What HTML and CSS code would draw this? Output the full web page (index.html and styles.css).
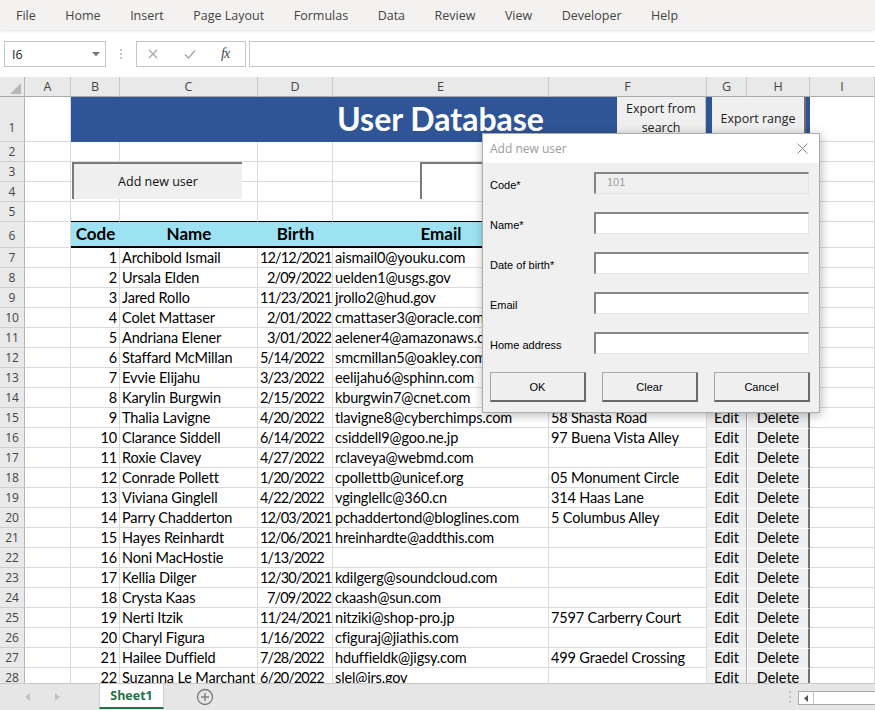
FILE: index.html
```html
<!DOCTYPE html>
<html>
<head>
<meta charset="utf-8">
<title>User Database</title>
<link rel="stylesheet" href="styles.css">
</head>
<body>
<div class="menubar">
  <span>File</span><span>Home</span><span>Insert</span><span>Page Layout</span><span>Formulas</span><span>Data</span><span>Review</span><span>View</span><span>Developer</span><span>Help</span>
</div>
<div class="fbar">
  <div class="namebox"><span>I6</span><svg class="caret" width="8" height="5" viewBox="0 0 8 5"><polygon points="0,0 8,0 4,4.5" fill="#7a7a7a"/></svg></div>
  <div class="grip"><i></i><i></i><i></i></div>
  <div class="fxbox">
    <svg class="ic-x" width="10" height="10" viewBox="0 0 10 10"><path d="M1 1L9 9M9 1L1 9" stroke="#a6a6a6" stroke-width="1.3" fill="none"/></svg>
    <svg class="ic-ok" width="12" height="10" viewBox="0 0 12 10"><path d="M1 5.5L4.5 9L11 1.5" stroke="#a6a6a6" stroke-width="1.4" fill="none"/></svg>
    <span class="fx">fx</span>
  </div>
  <div class="finput"></div>
</div>

<div class="sheet">
  <div class="row colhdr">
    <div class="corner"><svg width="24" height="19" viewBox="0 0 24 19"><polygon points="10,17 21,17 21,6" fill="#b8b8b8"/></svg></div>
    <div>A</div><div>B</div><div>C</div><div>D</div><div>E</div><div>F</div><div>G</div><div>H</div><div>I</div>
  </div>

  <div class="row r1">
    <div class="rh">1</div><div class="c"></div>
    <div class="title">User Database
      <div class="xbtn xsearch">Export from<br>search</div>
      <div class="xbtn xrange">Export range</div>
    </div>
    <div class="c"></div>
  </div>

  <div class="row"><div class="rh">2</div><div class="c"></div><div class="c"></div><div class="c"></div><div class="c"></div><div class="c"></div><div class="c"></div><div class="c"></div><div class="c"></div><div class="c"></div></div>

  <div class="pair">
    <div class="row"><div class="rh">3</div><div class="c"></div><div class="c"></div><div class="c"></div><div class="c"></div><div class="c"></div><div class="c"></div><div class="c"></div><div class="c"></div><div class="c"></div></div>
    <div class="row"><div class="rh">4</div><div class="c"></div><div class="c"></div><div class="c"></div><div class="c"></div><div class="c"></div><div class="c"></div><div class="c"></div><div class="c"></div><div class="c"></div></div>
    <div class="addbtn">Add new user</div>
    <div class="searchbox"></div>
  </div>

  <div class="row"><div class="rh">5</div><div class="c"></div><div class="c bb"></div><div class="c bb"></div><div class="c bb"></div><div class="c bb"></div><div class="c bb"></div><div class="c bb"></div><div class="c bb"></div><div class="c"></div></div>

  <div class="row r6"><div class="rh">6</div><div class="c"></div><div class="hd">Code</div><div class="hd">Name</div><div class="hd">Birth</div><div class="hd">Email</div><div class="hd">Address</div><div class="hd"></div><div class="hd"></div><div class="c"></div></div>

  <div class="row"><div class="rh">7</div><div class="c"></div><div class="c n">1</div><div class="c">Archibold Ismail</div><div class="c n">12/12/2021</div><div class="c">aismail0@youku.com</div><div class="c"></div><div class="eb">Edit</div><div class="db">Delete</div><div class="c"></div></div>
  <div class="row"><div class="rh">8</div><div class="c"></div><div class="c n">2</div><div class="c">Ursala Elden</div><div class="c n">2/09/2022</div><div class="c">uelden1@usgs.gov</div><div class="c"></div><div class="eb">Edit</div><div class="db">Delete</div><div class="c"></div></div>
  <div class="row"><div class="rh">9</div><div class="c"></div><div class="c n">3</div><div class="c">Jared Rollo</div><div class="c">11/23/2021</div><div class="c">jrollo2@hud.gov</div><div class="c"></div><div class="eb">Edit</div><div class="db">Delete</div><div class="c"></div></div>
  <div class="row"><div class="rh">10</div><div class="c"></div><div class="c n">4</div><div class="c">Colet Mattaser</div><div class="c n">2/01/2022</div><div class="c">cmattaser3@oracle.com</div><div class="c"></div><div class="eb">Edit</div><div class="db">Delete</div><div class="c"></div></div>
  <div class="row"><div class="rh">11</div><div class="c"></div><div class="c n">5</div><div class="c">Andriana Elener</div><div class="c n">3/01/2022</div><div class="c">aelener4@amazonaws.com</div><div class="c"></div><div class="eb">Edit</div><div class="db">Delete</div><div class="c"></div></div>
  <div class="row"><div class="rh">12</div><div class="c"></div><div class="c n">6</div><div class="c">Staffard McMillan</div><div class="c">5/14/2022</div><div class="c">smcmillan5@oakley.com</div><div class="c"></div><div class="eb">Edit</div><div class="db">Delete</div><div class="c"></div></div>
  <div class="row"><div class="rh">13</div><div class="c"></div><div class="c n">7</div><div class="c">Evvie Elijahu</div><div class="c">3/23/2022</div><div class="c">eelijahu6@sphinn.com</div><div class="c"></div><div class="eb">Edit</div><div class="db">Delete</div><div class="c"></div></div>
  <div class="row"><div class="rh">14</div><div class="c"></div><div class="c n">8</div><div class="c">Karylin Burgwin</div><div class="c">2/15/2022</div><div class="c">kburgwin7@cnet.com</div><div class="c"></div><div class="eb">Edit</div><div class="db">Delete</div><div class="c"></div></div>
  <div class="row"><div class="rh">15</div><div class="c"></div><div class="c n">9</div><div class="c">Thalia Lavigne</div><div class="c">4/20/2022</div><div class="c">tlavigne8@cyberchimps.com</div><div class="c">58 Shasta Road</div><div class="eb">Edit</div><div class="db">Delete</div><div class="c"></div></div>
  <div class="row"><div class="rh">16</div><div class="c"></div><div class="c n">10</div><div class="c">Clarance Siddell</div><div class="c">6/14/2022</div><div class="c">csiddell9@goo.ne.jp</div><div class="c">97 Buena Vista Alley</div><div class="eb">Edit</div><div class="db">Delete</div><div class="c"></div></div>
  <div class="row"><div class="rh">17</div><div class="c"></div><div class="c n">11</div><div class="c">Roxie Clavey</div><div class="c">4/27/2022</div><div class="c">rclaveya@webmd.com</div><div class="c"></div><div class="eb">Edit</div><div class="db">Delete</div><div class="c"></div></div>
  <div class="row"><div class="rh">18</div><div class="c"></div><div class="c n">12</div><div class="c">Conrade Pollett</div><div class="c">1/20/2022</div><div class="c">cpollettb@unicef.org</div><div class="c">05 Monument Circle</div><div class="eb">Edit</div><div class="db">Delete</div><div class="c"></div></div>
  <div class="row"><div class="rh">19</div><div class="c"></div><div class="c n">13</div><div class="c">Viviana Ginglell</div><div class="c">4/22/2022</div><div class="c">vginglellc@360.cn</div><div class="c">314 Haas Lane</div><div class="eb">Edit</div><div class="db">Delete</div><div class="c"></div></div>
  <div class="row"><div class="rh">20</div><div class="c"></div><div class="c n">14</div><div class="c">Parry Chadderton</div><div class="c n">12/03/2021</div><div class="c">pchaddertond@bloglines.com</div><div class="c">5 Columbus Alley</div><div class="eb">Edit</div><div class="db">Delete</div><div class="c"></div></div>
  <div class="row"><div class="rh">21</div><div class="c"></div><div class="c n">15</div><div class="c">Hayes Reinhardt</div><div class="c n">12/06/2021</div><div class="c">hreinhardte@addthis.com</div><div class="c"></div><div class="eb">Edit</div><div class="db">Delete</div><div class="c"></div></div>
  <div class="row"><div class="rh">22</div><div class="c"></div><div class="c n">16</div><div class="c">Noni MacHostie</div><div class="c">1/13/2022</div><div class="c"></div><div class="c"></div><div class="eb">Edit</div><div class="db">Delete</div><div class="c"></div></div>
  <div class="row"><div class="rh">23</div><div class="c"></div><div class="c n">17</div><div class="c">Kellia Dilger</div><div class="c">12/30/2021</div><div class="c">kdilgerg@soundcloud.com</div><div class="c"></div><div class="eb">Edit</div><div class="db">Delete</div><div class="c"></div></div>
  <div class="row"><div class="rh">24</div><div class="c"></div><div class="c n">18</div><div class="c">Crysta Kaas</div><div class="c n">7/09/2022</div><div class="c">ckaash@sun.com</div><div class="c"></div><div class="eb">Edit</div><div class="db">Delete</div><div class="c"></div></div>
  <div class="row"><div class="rh">25</div><div class="c"></div><div class="c n">19</div><div class="c">Nerti Itzik</div><div class="c">11/24/2021</div><div class="c">nitziki@shop-pro.jp</div><div class="c">7597 Carberry Court</div><div class="eb">Edit</div><div class="db">Delete</div><div class="c"></div></div>
  <div class="row"><div class="rh">26</div><div class="c"></div><div class="c n">20</div><div class="c">Charyl Figura</div><div class="c">1/16/2022</div><div class="c">cfiguraj@jiathis.com</div><div class="c"></div><div class="eb">Edit</div><div class="db">Delete</div><div class="c"></div></div>
  <div class="row"><div class="rh">27</div><div class="c"></div><div class="c n">21</div><div class="c">Hailee Duffield</div><div class="c">7/28/2022</div><div class="c">hduffieldk@jigsy.com</div><div class="c">499 Graedel Crossing</div><div class="eb">Edit</div><div class="db">Delete</div><div class="c"></div></div>
  <div class="row"><div class="rh">28</div><div class="c"></div><div class="c n">22</div><div class="c">Suzanna Le Marchant</div><div class="c">6/20/2022</div><div class="c">slel@irs.gov</div><div class="c"></div><div class="eb">Edit</div><div class="db">Delete</div><div class="c"></div></div>
</div>

<div class="sheetbar">
  <div class="nav">
    <svg width="6" height="8" viewBox="0 0 6 8"><polygon points="5,0 5,8 0,4" fill="#c2c2c2"/></svg>
    <svg width="6" height="8" viewBox="0 0 6 8"><polygon points="1,0 1,8 6,4" fill="#c2c2c2"/></svg>
  </div>
  <div class="tab">Sheet1</div>
  <svg class="plus" width="18" height="18" viewBox="0 0 18 18"><circle cx="9" cy="9" r="7.5" fill="none" stroke="#7d7d7d" stroke-width="1.3"/><path d="M9 5V13M5 9H13" stroke="#7d7d7d" stroke-width="1.4"/></svg>
  <div class="spacer"></div>
  <div class="vdots"><i></i><i></i><i></i></div>
  <div class="hscroll"><div class="harrow"><svg width="4" height="7" viewBox="0 0 4 7"><polygon points="4,0 4,7 0,3.5" fill="#555"/></svg></div></div>
</div>

<div class="dialog">
  <div class="dlg-title"><span>Add new user</span><svg width="11" height="11" viewBox="0 0 11 11"><path d="M0.5 0.5L10.5 10.5M10.5 0.5L0.5 10.5" stroke="#8a8a8a" stroke-width="1" fill="none"/></svg></div>
  <div class="dlg-body">
    <div class="form">
      <label>Code*</label><div class="inp dis">101</div>
      <label>Name*</label><div class="inp"></div>
      <label>Date of birth*</label><div class="inp"></div>
      <label>Email</label><div class="inp"></div>
      <label>Home address</label><div class="inp"></div>
    </div>
    <div class="btns">
      <div class="wbtn">OK</div><div class="wbtn">Clear</div><div class="wbtn">Cancel</div>
    </div>
  </div>
</div>
</body>
</html>
```
FILE: styles.css
```css
* { box-sizing: border-box; margin: 0; padding: 0; }
html, body { width: 875px; height: 710px; overflow: hidden; background: #fff; }
body { font-family: "Open Sans", sans-serif; position: relative; color: #000; }

/* menu */
.menubar { height: 30px; background: #f3f2f1; display: flex; align-items: center; gap: 29.5px; padding-left: 16px; font-size: 12.5px; color: #444; position: relative; z-index: 2; box-shadow: 0 1px 3px rgba(0,0,0,0.13); }

/* formula bar */
.fbar { height: 47px; display: flex; align-items: flex-start; padding: 11px 0 0 4px; background: #fff; }
.namebox { width: 102px; height: 26px; border: 1px solid #c6c6c6; display: flex; align-items: center; justify-content: space-between; padding: 0 5px 0 7px; font-size: 12.5px; color: #222; }
.grip { width: 30px; height: 26px; display: flex; flex-direction: column; align-items: center; justify-content: center; gap: 2px; }
.grip i, .vdots i { display: block; width: 2px; height: 2px; background: #c4c4c4; }
.fxbox { width: 110px; height: 26px; border: 1px solid #c6c6c6; display: flex; align-items: center; padding-left: 11px; }
.ic-x { margin-right: 26px; }
.ic-ok { margin-right: 25px; }
.fx { font-family: "Liberation Serif", serif; font-style: italic; font-size: 14px; color: #444; letter-spacing: -1px; }
.finput { flex: 1; margin-left: 3px; height: 26px; border: 1px solid #c6c6c6; border-right: none; }

/* sheet */
.sheet { height: 606px; overflow: hidden; font-family: Lato, sans-serif; font-size: 14.5px; }
.row { display: grid; grid-template-columns: 25px 46px 49px 138px 75px 216px 158px 40px 63px 65px; height: 20px; }
.c { border-right: 1px solid #dadada; border-bottom: 1px solid #dadada; padding: 0 2px; line-height: 19px; white-space: nowrap; overflow: hidden; letter-spacing: -0.15px; }
.row > .c:nth-child(5) { letter-spacing: -0.9px; padding: 0 1px 0 2px; }
.n { text-align: right; }
.bb { border-bottom-color: #000; }
.rh { background: #e9e9e9; border-right: 1px solid #b5b5b5; border-bottom: 1px solid #cfcfcf; text-align: center; font-family: "Open Sans", sans-serif; font-size: 12px; color: #444; line-height: 19px; }

.colhdr > div { background: #e9e9e9; border-right: 1px solid #c9c9c9; border-bottom: 1px solid #a9a9a9; text-align: center; font-family: "Open Sans", sans-serif; font-size: 12.5px; color: #444; line-height: 19px; }
.colhdr > .corner { border-right-color: #b5b5b5; }
.corner svg { display: block; }

.r1 { height: 45px; }
.r1 .rh { line-height: 1; display: flex; align-items: flex-end; justify-content: center; padding-bottom: 7px; }
.title { grid-column: 3 / 10; background: #2f5597; border-bottom: 1px solid #2f5597; color: #fff; font-weight: 700; font-size: 32px; line-height: 44px; text-align: center; position: relative; }
.xbtn { position: absolute; top: 0; background: #efefef; color: #222; font-family: "Open Sans", sans-serif; font-weight: 400; font-size: 12.5px; text-align: center; }
.xsearch { left: 546px; width: 89px; height: 44px; line-height: 19px; padding-top: 2px; border-right: 1px solid #c2c2c2; }
.xrange { left: 641px; width: 94px; height: 43px; line-height: 43px; border-right: 2px solid #6e6e6e; }

.pair { position: relative; }
.addbtn { position: absolute; left: 72px; top: 0; width: 170px; height: 37px; background: #efefef; border-top: 2px solid #7a7a7a; border-left: 2px solid #7a7a7a; font-family: "Open Sans", sans-serif; font-size: 12.5px; color: #111; display: flex; align-items: center; justify-content: center; }
.searchbox { position: absolute; left: 420px; top: 0; width: 200px; height: 37px; background: #fff; border-top: 2px solid #7a7a7a; border-left: 2px solid #7a7a7a; }

.r6 { height: 26px; }
.r6 .rh { line-height: 1; display: flex; align-items: flex-end; justify-content: center; padding-bottom: 5px; }
.hd { background: #9de2f2; border-bottom: 2px solid #000; font-weight: 700; font-size: 17px; line-height: 24px; text-align: center; white-space: nowrap; overflow: hidden; }
.r6 > .c { line-height: 25px; }

.eb, .db { background: #efefef; border-top: 1px solid #fff; text-align: center; line-height: 18px; white-space: nowrap; overflow: hidden; }
.eb { border-right: 1px solid #ababab; }
.db { border-left: 1px solid #fff; border-right: 2px solid #707070; }

/* sheet tabs */
.sheetbar { height: 27px; background: #e6e6e6; border-top: 1px solid #c8c8c8; display: flex; align-items: flex-start; }
.nav { width: 99px; height: 26px; display: flex; align-items: center; padding-left: 25px; gap: 23px; }
.nav svg { display: block; }
.tab { width: 65px; height: 25px; background: #fff; border-bottom: 2px solid #217346; border-left: 1px solid #d0d0d0; border-right: 1px solid #d0d0d0; color: #217346; font-weight: 700; font-size: 12.5px; text-align: center; line-height: 24px; }
.plus { margin: 4px 0 0 32px; display: block; }
.spacer { flex: 1; }
.vdots { width: 16px; height: 26px; display: flex; flex-direction: column; align-items: center; justify-content: center; gap: 3px; }
.hscroll { width: 77px; height: 14px; margin-top: 7px; background: #fff; border: 1px solid #a9a9a9; border-right: none; }
.harrow { width: 15px; height: 12px; border-right: 1px solid #c8c8c8; display: flex; align-items: center; justify-content: center; }
.harrow svg { display: block; }

/* dialog */
.dialog { position: absolute; left: 482px; top: 133px; width: 338px; height: 280px; background: #f0f0f0; border: 1px solid #acacac; box-shadow: 1px 2px 10px rgba(0,0,0,0.28); font-family: "Liberation Sans", sans-serif; font-size: 11px; color: #000; z-index: 5; }
.dlg-title { height: 29px; background: #fff; display: flex; align-items: center; justify-content: space-between; padding: 0 11px 0 7px; font-family: "Open Sans", sans-serif; font-size: 12px; color: #9a9a9a; }
.dlg-title svg { display: block; }
.dlg-body { padding: 9px 0 0 7px; }
.form { display: grid; grid-template-columns: 104px 215px; grid-auto-rows: 22px; row-gap: 18px; align-items: center; }
.form label { padding-top: 4px; }
.inp { height: 22px; background: #fff; border-style: solid; border-width: 2px 1px 1px 2px; border-color: #858585 #e3e3e3 #e3e3e3 #858585; padding-left: 11px; line-height: 17px; color: #a0a0a0; }
.inp.dis { background: #f0f0f0; }
.btns { display: flex; gap: 16px; margin-top: 18px; }
.wbtn { width: 96px; height: 30px; background: #efefef; border-style: solid; border-width: 1px 2px 2px 1px; border-color: #a9a9a9 #6a6a6a #6a6a6a #a9a9a9; display: flex; align-items: center; justify-content: center; font-size: 11px; }
```
